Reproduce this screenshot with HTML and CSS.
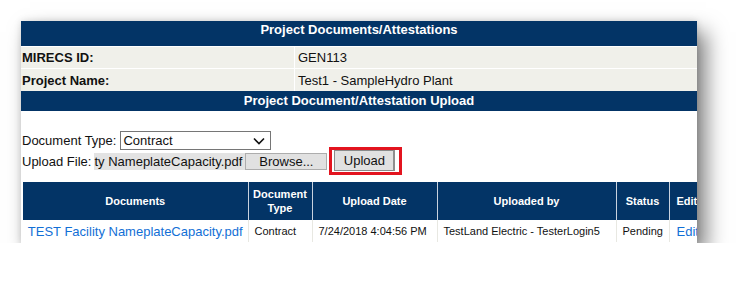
FILE: index.html
```html
<!DOCTYPE html>
<html>
<head>
<meta charset="utf-8">
<link rel="stylesheet" href="styles.css">
</head>
<body>
<div class="card">
  <div class="bar bar-main">Project Documents/Attestations</div>
  <div class="info">
    <div class="info-row">
      <div class="info-label">MIRECS ID:</div>
      <div class="info-value">GEN113</div>
    </div>
    <div class="info-row">
      <div class="info-label">Project Name:</div>
      <div class="info-value">Test1 - SampleHydro Plant</div>
    </div>
  </div>
  <div class="bar bar-sub">Project Document/Attestation Upload</div>
  <div class="form">
    <div class="form-row">
      <span class="form-label">Document Type:</span>
      <span class="select">
        <span class="select-text">Contract</span>
        <svg class="chevron" width="12" height="8" viewBox="0 0 12 8"><path d="M1 1.5 L6 6.5 L11 1.5" fill="none" stroke="#111" stroke-width="1.6"/></svg>
      </span>
    </div>
    <div class="form-row form-row-upload">
      <span class="form-label">Upload File:</span>
      <span class="file-field"><span class="file-name">ty NameplateCapacity.pdf</span></span>
      <span class="btn btn-browse">Browse...</span>
      <span class="highlight"><span class="btn btn-upload">Upload</span></span>
    </div>
  </div>
  <table class="docs">
    <colgroup>
      <col class="c-doc"><col class="c-type"><col class="c-date"><col class="c-by"><col class="c-status"><col class="c-edit">
    </colgroup>
    <thead>
      <tr>
        <th>Documents</th>
        <th>Document<br>Type</th>
        <th>Upload Date</th>
        <th>Uploaded by</th>
        <th>Status</th>
        <th class="th-edit">Edit</th>
      </tr>
    </thead>
    <tbody>
      <tr>
        <td class="td-doc"><a class="link">TEST Facility NameplateCapacity.pdf</a></td>
        <td>Contract</td>
        <td>7/24/2018 4:04:56 PM</td>
        <td>TestLand Electric - TesterLogin5</td>
        <td>Pending</td>
        <td class="td-edit"><a class="link">Edit</a></td>
      </tr>
    </tbody>
  </table>
</div>
</body>
</html>
```

FILE: styles.css
```css
html, body {
  margin: 0;
  padding: 0;
  background: #ffffff;
}

body {
  font-family: "Liberation Sans", Arial, sans-serif;
  color: #111;
}

.card {
  margin: 21px 0 0 21px;
  width: 676px;
  height: 222px;
  overflow: hidden;
  background: #fff;
  box-shadow: 9px 11px 20px rgba(0, 0, 0, 0.5), 0 0 7px rgba(0, 0, 0, 0.14);
}

.bar {
  background: #033466;
  color: #fff;
  font-weight: bold;
  font-size: 13px;
  text-align: center;
}

.bar-main {
  height: 24px;
  padding-top: 1px;
  line-height: 16px;
}

.bar-sub {
  height: 20px;
  line-height: 20px;
}

.info {
  display: flex;
  flex-direction: column;
  gap: 1px;
  margin-top: 1px;
  background: #fff;
}

.info-row {
  display: grid;
  grid-template-columns: 273px 1fr;
  column-gap: 1px;
  font-size: 13px;
}

.info-row:first-child {
  height: 21px;
}

.info-row:last-child {
  height: 22px;
}

.info-label {
  background: #f0f0ea;
  font-weight: bold;
  padding-left: 1px;
  display: flex;
  align-items: center;
}

.info-value {
  background: #f0f0ea;
  padding-left: 3px;
  display: flex;
  align-items: center;
}

.form {
  padding: 20px 0 0 1px;
  font-size: 13px;
}

.form-row {
  display: flex;
  align-items: center;
  height: 19px;
}

.form-row-upload {
  height: 22px;
}

.form-label {
  margin-right: 4px;
}

.select {
  box-sizing: border-box;
  width: 151px;
  height: 19px;
  border: 1px solid #767676;
  background: #fff;
  display: flex;
  align-items: center;
  justify-content: space-between;
  padding: 0 5px 0 2px;
}

.chevron {
  display: block;
}

.form-row-upload .form-label {
  margin-right: 3px;
}

.file-field {
  box-sizing: border-box;
  width: 151px;
  height: 17px;
  background: #e3e3e3;
  overflow: hidden;
  display: flex;
  justify-content: flex-end;
  align-items: center;
  padding-right: 3px;
}

.file-name {
  white-space: nowrap;
}

.btn {
  box-sizing: border-box;
  display: flex;
  align-items: center;
  justify-content: center;
  background: #e1e1e1;
  border: 1px solid #adadad;
}

.btn-browse {
  width: 82px;
  height: 17px;
}

.highlight {
  margin-left: 5px;
  padding: 0 4px 1px 2px;
  outline: 3px solid #e3141f;
}

.btn-upload {
  width: 61px;
  height: 21px;
  border-color: #8a8a8a;
  border-right: 2px solid #8f8f8f;
}

.docs {
  margin: 10px 0 0 2px;
  border-collapse: collapse;
  table-layout: fixed;
  width: 720px;
  font-size: 11px;
}

.c-doc { width: 225px; }
.c-type { width: 64px; }
.c-date { width: 125px; }
.c-by { width: 179px; }
.c-status { width: 53px; }
.c-edit { width: 74px; }

.docs th {
  background: #033466;
  color: #fff;
  font-weight: bold;
  height: 38px;
  padding: 0;
  text-align: center;
  line-height: 14px;
  border-right: 1px solid #c9d2de;
}

.docs th.th-edit {
  text-align: left;
  padding-left: 7px;
}

.docs td {
  height: 22px;
  padding: 0 0 0 6px;
  white-space: nowrap;
  border-right: 1px solid #e8e8e2;
}

.docs td.td-doc {
  font-size: 13px;
  text-align: center;
  padding: 0;
}

.link {
  color: #126fd6;
  text-decoration: none;
}

.docs td.td-edit {
  font-size: 13px;
  padding-left: 7px;
}
```
